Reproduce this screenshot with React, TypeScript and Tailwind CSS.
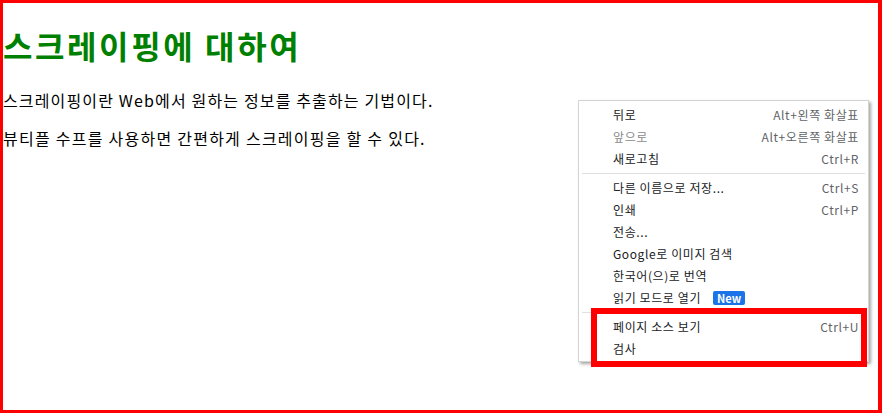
import React from 'react'

type Item = { label: string; shortcut?: string; disabled?: boolean; badge?: string }

const groups: Item[][] = [
    [
        { label: '뒤로', shortcut: 'Alt+왼쪽 화살표' },
        { label: '앞으로', shortcut: 'Alt+오른쪽 화살표', disabled: true },
        { label: '새로고침', shortcut: 'Ctrl+R' },
    ],
    [
        { label: '다른 이름으로 저장...', shortcut: 'Ctrl+S' },
        { label: '인쇄', shortcut: 'Ctrl+P' },
        { label: '전송...' },
        { label: 'Google로 이미지 검색' },
        { label: '한국어(으)로 번역' },
        { label: '읽기 모드로 열기', badge: 'New' },
    ],
    [
        { label: '페이지 소스 보기', shortcut: 'Ctrl+U' },
        { label: '검사' },
    ],
]

function MenuRow({ item }: { item: Item }) {
    return (
        <div className="flex h-[22px] items-center justify-between pl-[34px] pr-[9px] tracking-[0.6px]">
            <div className="flex items-center gap-[12px]">
                <span className={item.disabled ? 'text-[#8a8a8a]' : 'text-[#202124]'}>{item.label}</span>
                {item.badge && (
                    <span className="rounded-[2px] bg-[#1a73e8] px-[4px] text-[11px] font-semibold leading-[14px] tracking-normal text-white">
                        {item.badge}
                    </span>
                )}
            </div>
            {item.shortcut && <span className="text-[#5f6368]">{item.shortcut}</span>}
        </div>
    )
}

export default function App() {
    return (
        <div
            className="relative h-[413px] w-[882px] overflow-hidden border-[3px] border-r-4 border-[#ff0000] bg-white text-black"
            style={{ fontFamily: '"Noto Sans CJK KR", "Noto Sans", sans-serif' }}
        >
            {/* Page content */}
            <h1 className="mt-[21px] text-[32px] font-bold leading-[43px] tracking-[2.6px] text-[#008000]">스크레이핑에 대하여</h1>
            <p className="mt-[23px] text-[16px] leading-[21px] tracking-[1.15px]">스크레이핑이란 Web에서 원하는 정보를 추출하는 기법이다.</p>
            <p className="mt-[17px] text-[16px] leading-[21px] tracking-[1.25px]">뷰티플 수프를 사용하면 간편하게 스크레이핑을 할 수 있다.</p>

            {/* Context menu */}
            <div className="absolute left-[575px] top-[97px] w-[291px] border border-[#d4d4d4] bg-white pb-[1px] pt-[3px] text-[12px] shadow-[2px_2px_3px_rgba(0,0,0,0.35)]">
                {groups.map((group, gi) => (
                    <div key={gi}>
                        {gi > 0 && <div className="mx-[3px] mb-[3px] mt-[3px] h-px bg-[#e0e0e0]" />}
                        {group.map((item) => (
                            <MenuRow key={item.label} item={item} />
                        ))}
                    </div>
                ))}
            </div>

            {/* Highlight box */}
            <div className="absolute left-[588px] top-[305px] h-[59px] w-[276px] border-[6px] border-[#ff0000]" />
        </div>
    )
}
